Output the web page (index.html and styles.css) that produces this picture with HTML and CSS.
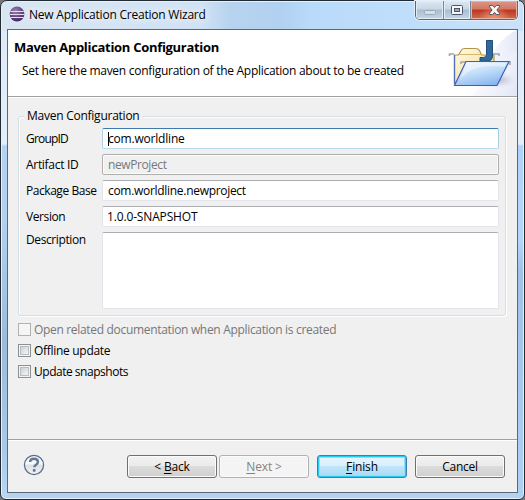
FILE: index.html
```html
<!DOCTYPE html>
<html lang="en">
<head>
<meta charset="utf-8">
<title>New Application Creation Wizard</title>
<link rel="stylesheet" href="styles.css">
</head>
<body>
<div class="window">
  <header class="titlebar">
    <svg class="app-icon" width="16" height="16" viewBox="0 0 16 16">
      <defs><radialGradient id="orb" cx=".4" cy=".3" r=".75"><stop offset="0" stop-color="#9b82b0"/><stop offset=".6" stop-color="#654580"/><stop offset="1" stop-color="#3b2257"/></radialGradient></defs>
      <circle cx="8" cy="8" r="7.4" fill="url(#orb)"/>
      <path d="M1.3 5.5h13.4M.8 8.5h14.4M1.3 11.5h13.4" stroke="#e4dcec" stroke-width="1.1"/>
    </svg>
    <span class="title">New Application Creation Wizard</span>
    <div class="controls">
      <div class="control minimize"><svg width="27" height="19"><rect x="8.5" y="10.5" width="11" height="4" rx="1" fill="#d5dfe9" stroke="#9aa9ba"/></svg></div>
      <div class="control maximize"><svg width="26" height="19"><rect x="7.5" y="5.5" width="11" height="9" rx="1" fill="#f6f7f8" stroke="#4d5668"/><rect x="10.5" y="8.5" width="5" height="3" fill="#8eabc7" stroke="#4d5668"/></svg></div>
      <div class="control close"><svg width="46" height="19"><path d="M18.5 5.5h3.2l1.8 2 1.8-2h3.2v1.3L25.9 10l2.6 3.2v1.3h-3.2l-1.8-2.1-1.8 2.1h-3.2v-1.3l2.6-3.2-2.6-3.2z" fill="#f7f4f4" stroke="#535666"/></svg></div>
    </div>
  </header>
  <main class="client">
    <section class="banner">
      <div class="banner-text">
        <h1>Maven Application Configuration</h1>
        <p>Set here the maven configuration of the Application about to be created</p>
      </div>
      <svg class="banner-art" width="75" height="66" viewBox="0 0 75 66">
        <defs>
          <linearGradient id="wash" x1="0" x2="1" y1="0" y2="1"><stop offset=".15" stop-color="#fff"/><stop offset="1" stop-color="#dfe5f6"/></linearGradient>
          <linearGradient id="swoosh" x1="0" x2="1"><stop offset="0" stop-color="#fff" stop-opacity="0"/><stop offset="1" stop-color="#e4e9f8"/></linearGradient>
          <linearGradient id="manila" x1="0" x2="1" y1="0" y2="1"><stop offset="0" stop-color="#fffbea"/><stop offset="1" stop-color="#efd68b"/></linearGradient>
          <linearGradient id="flap" x1=".2" x2=".7" y1="0" y2="1"><stop offset="0" stop-color="#eef6fe"/><stop offset=".45" stop-color="#c4defa"/><stop offset="1" stop-color="#84b4ef"/></linearGradient>
          <radialGradient id="shade"><stop offset="0" stop-color="#8e8da4" stop-opacity=".65"/><stop offset="1" stop-color="#c8c8dd" stop-opacity="0"/></radialGradient>
        </defs>
        <path d="M75 0C58 8 49 23 45 38L10 66H75z" fill="url(#swoosh)"/>
        <path d="M75 21C58 29 49 43 30 66H75z" fill="url(#wash)" opacity=".55"/>
        <ellipse cx="55" cy="50" rx="19" ry="8" fill="url(#shade)"/>
        <path d="M7.500 26v-2h4.500M51 24h6v2" fill="none" stroke="#a4a5a8" stroke-width="1.600"/>
        <path d="M12.500 25h4l3-5q1-1.500 3-1.500h11q3 0 4 2l2 4.500h12.500v27H12.500z" fill="url(#manila)" stroke="#b39448" stroke-width="1.200"/>
        <path d="M17 24.500h24" stroke="#d3b96d"/>
        <path d="M12.500 25v29" stroke="#5471b6" stroke-width="1.300"/>
        <path d="M44.500 10.500h6V26q0 5-5 5H38v-3.500h3.500q3 0 3-3z" fill="#326899" stroke="#1d4e7e"/>
        <path d="M19 34v-2h5M64 32h4v3" fill="none" stroke="#aaa6a0" stroke-width="1.600"/>
        <path d="M24 31.500h43L55 55.500H12.500z" fill="url(#flap)" stroke="#3c5fbd" stroke-width="1.200"/>
        <path d="M24.500 33h40l-2 4C42 34 28 38 18 49z" fill="#fff" opacity=".42"/>
      </svg>
    </section>
    <section class="page">
      <div class="group">
        <span class="legend">Maven Configuration</span>
        <span class="label groupid">GroupID</span><div class="field focused"><i class="caret"></i><span>com.worldline</span></div>
        <span class="label artifact">Artifact ID</span><div class="field readonly"><span>newProject</span></div>
        <span class="label package">Package Base</span><div class="field"><span>com.worldline.newproject</span></div>
        <span class="label version">Version</span><div class="field snapshot"><span>1.0.0-SNAPSHOT</span></div>
        <span class="label description">Description</span><div class="field area"></div>
      </div>
      <div class="checks">
        <div class="check disabled"><i class="box"></i><span class="docs">Open related documentation when Application is created</span></div>
        <div class="check"><i class="box"></i><span>Offline update</span></div>
        <div class="check"><i class="box"></i><span class="snapshots">Update snapshots</span></div>
      </div>
    </section>
    <footer class="footer">
      <svg class="help" width="22" height="22" viewBox="0 0 22 22">
        <defs><linearGradient id="helpfill" x2="0" y2="1"><stop offset=".45" stop-color="#f7f7f8"/><stop offset=".5" stop-color="#dddfe3"/><stop offset="1" stop-color="#f5f5f5"/></linearGradient></defs>
        <circle cx="11" cy="11" r="9.600" fill="url(#helpfill)" stroke="#586c8c" stroke-width="1.200"/>
        <path d="M7 8q.3-3.300 4-3.300t4 3.100q0 1.700-1.900 2.900-1.800 1.100-1.800 2.600" fill="none" stroke="#61779b" stroke-width="2.400"/>
        <rect x="9.800" y="15" width="2.800" height="2.700" rx=".8" fill="#61779b"/>
      </svg>
      <div class="button back"><span>&lt; <u>B</u>ack</span></div>
      <div class="button next"><span><u>N</u>ext &gt;</span></div>
      <div class="button finish"><span><u>F</u>inish</span></div>
      <div class="button cancel"><span>Cancel</span></div>
    </footer>
  </main>
</div>
</body>
</html>
```
FILE: styles.css
```css
* { box-sizing: border-box; }
body {
  margin: 0;
  width: 525px;
  height: 500px;
  overflow: hidden;
  background: #777;
  color: #000;
  font: 12px/16px "Open Sans", "Noto Sans", sans-serif;
  letter-spacing: -.3px;
  white-space: nowrap;
}
.window {
  width: 525px;
  height: 500px;
  padding: 0 6px 6px;
  border: 1px solid #222a34;
  border-radius: 7px 7px 6px 6px;
  box-shadow: inset 0 0 0 1px #e4f1fc;
  background:
    linear-gradient(90deg, #d9e6f2 0, #d0e2f5 200px, #b7d3ef 230px, #b2d1f0 280px, #b9daf9 310px, #bfdefb 410px, #cae1f8) top / 100% 30px no-repeat,
    linear-gradient(#dce9f6 0, #e3eefb 143px, #b4d3f2 145px, #b2d1ef 220px, #9bbbdd 340px, #a8cae9 450px, #b9d6f2) left / 8px 100% no-repeat,
    linear-gradient(#dce9f6 0, #e3eefb 143px, #afd4f9 145px, #b5d6f8 240px, #a1c2e5 270px, #add0f3) right / 8px 100% no-repeat,
    #b5d3ef;
}
.titlebar { display: flex; height: 28px; padding-left: 2px; }
.app-icon { margin-top: 5px; }
.title { margin: 6px auto 0 4px; letter-spacing: -.22px; text-shadow: 0 0 7px #fff, 0 0 12px #fff; }
.controls {
  display: flex;
  width: 103px;
  height: 19px;
  border: 1px solid #596777;
  border-top: 0;
  border-radius: 0 0 5px 5px;
  overflow: hidden;
  box-shadow: 0 0 0 1px #e2effb;
}
.control { border-right: 1px solid #768698; background: linear-gradient(#dce7f1 0, #c9d7e5 45%, #a9bdd2 50%, #c4d7e9); box-shadow: inset 0 0 0 1px #e3edf6; }
.control svg { display: block; margin-top: -1px; }
.minimize { flex: none; width: 28px; }
.maximize { flex: none; width: 27px; }
.close { flex: 1; border: 0; background: radial-gradient(ellipse at 50% 100%, #ed9474 0, transparent 50%), linear-gradient(#dd9688 0, #d27764 45%, #ba3522 50%, #cf6b4d); box-shadow: inset 0 0 0 1px #eab1a3; }
.client { display: flex; flex-direction: column; width: 511px; height: 464px; border: 1px solid #5b6877; background: #f0f0f0; }
.banner { display: flex; justify-content: space-between; height: 67px; background: #fff; border-bottom: 1px solid #a0a0a0; }
.banner-text { padding: 8px 0 0 6px; }
h1 { margin: 0; font-size: 13px; line-height: 18px; font-weight: 700; }
p { margin: 7px 0 0 8px; letter-spacing: -.28px; }
.page { height: 342px; padding: 15px 10px 0; border-top: 1px solid #fff; }
.group {
  position: relative;
  display: grid;
  grid-template-columns: 76px 397px;
  grid-template-rows: repeat(4, 21px) 77px;
  row-gap: 5px;
  width: 488px;
  height: 200px;
  margin-top: 3px;
  padding: 11px 7px;
  border: 1px solid #d5dfe5;
  border-radius: 3px;
  box-shadow: 1px 1px #fff, inset 1px 1px #fff;
}
.legend { position: absolute; top: -9px; left: 5px; padding: 0 3px; background: #f0f0f0; letter-spacing: -.25px; }
.label { padding-top: 3px; }
.groupid { letter-spacing: -.8px; }
.package { letter-spacing: -.45px; }
.version, .description { letter-spacing: -.4px; }
.description { padding-top: 0; }
.field { display: flex; padding: 2px 5px; background: #fff; border: 1px solid #e3e3eb; border-top-color: #abadb3; border-radius: 2px; }
.focused { border-color: #3d7bad #a4c9e3 #b7d9ed #b5cfe7; letter-spacing: -.2px; }
.caret { width: 1px; height: 14px; margin-top: 1px; background: #000; }
.focused span { margin-left: -1px; }
.readonly { border-color: #afafaf; background: #f0f0f0; color: #787878; box-shadow: inset 0 0 0 1px #fbfbfb; letter-spacing: -.4px; }
.snapshot { padding-left: 4px; letter-spacing: -.15px; }
.checks { padding-top: 6px; }
.check { display: flex; align-items: flex-start; height: 16px; margin-bottom: 5px; gap: 3px; }
.box { width: 13px; height: 13px; margin-top: 1px; border: 1px solid #8e8f8f; background: linear-gradient(135deg, #cbcfd5, #f6f6f6) center / 7px 7px no-repeat, #f4f4f4; box-shadow: inset 0 0 0 1px #f4f4f4, inset 0 0 0 2px #b8bdc4; }
.docs { letter-spacing: -.32px; }
.snapshots { letter-spacing: -.48px; }
.disabled { color: #777; }
.disabled .box { border-color: #b1b1b1; background: #f5f5f5; box-shadow: none; }
.footer { display: flex; align-items: flex-start; flex: 1; padding: 14px 0 0 15px; border-top: 1px solid #a0a0a0; box-shadow: inset 0 1px #fff; }
.help { margin-right: 82px; }
.button { width: 90px; height: 23px; margin: 1px 2px 0 0; border: 1px solid #707070; border-radius: 3px; background: linear-gradient(#f2f2f2 0, #ebebeb 48%, #dcdcdc 50%, #cfcfcf); box-shadow: inset 0 0 0 1px #fbfbfb; text-align: center; line-height: 21px; letter-spacing: -.15px; }
.next { margin-right: 8px; border-color: #adb2b5; background: #f4f4f4; color: #838383; }
.finish { margin-right: 8px; border-color: #3c7fb1; background: linear-gradient(#e8f4fb 0, #d9effb 48%, #bee6fd 50%, #a9d9f2); box-shadow: inset 0 0 0 1px #25caf5, inset 0 0 0 2px #8edff9; }
.cancel { letter-spacing: -.3px; }
u { text-decoration-thickness: 1px; text-underline-offset: 2px; text-decoration-skip-ink: none; }
```
